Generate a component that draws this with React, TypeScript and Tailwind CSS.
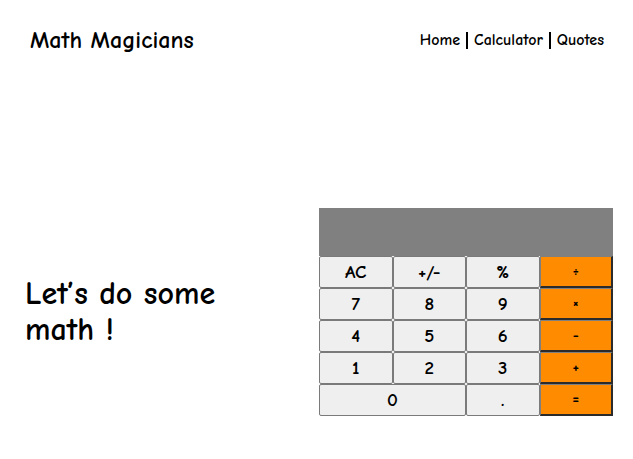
const keys: { label: string; op?: boolean; wide?: boolean }[] = [
  { label: "AC" },
  { label: "+/-" },
  { label: "%" },
  { label: "÷", op: true },
  { label: "7" },
  { label: "8" },
  { label: "9" },
  { label: "×", op: true },
  { label: "4" },
  { label: "5" },
  { label: "6" },
  { label: "-", op: true },
  { label: "1" },
  { label: "2" },
  { label: "3" },
  { label: "+", op: true },
  { label: "0", wide: true },
  { label: "." },
  { label: "=", op: true },
];

const font = { fontFamily: '"Comic Sans MS", "Comic Neue", "Chalkboard", cursive' };

function Calculator() {
  return (
    <div className="w-[294px]">
      <div className="h-[48px] bg-[#808080]" />
      <div className="grid grid-cols-4">
        {keys.map((key) =>
          key.op ? (
            <button
              key={key.label}
              type="button"
              className="h-[32px] border border-[#808080] border-r-2 border-b-2 border-r-[#2b2b2b] border-b-[#2b2b2b] bg-[#ff8c00] text-[15px] font-bold text-black"
            >
              {key.label}
            </button>
          ) : (
            <button
              key={key.label}
              type="button"
              className={`h-[32px] rounded-[2px] border border-[#7a7a7a] bg-[#efefef] text-[19px] font-semibold text-black ${key.wide ? "col-span-2" : ""}`}
            >
              {key.label}
            </button>
          ),
        )}
      </div>
    </div>
  );
}

export default function App() {
  return (
    <div className="h-[459px] bg-white text-black" style={font}>
      <header className="flex h-[80px] items-center justify-between pl-[30px] pr-[29px]">
        <h1 className="text-[24px] font-semibold">Math Magicians</h1>
        <nav className="flex items-center text-[16px] font-semibold">
          <a href="#">Home</a>
          <span className="mx-[6px] h-[17px] w-[2px] bg-black" />
          <a href="#">Calculator</a>
          <span className="mx-[6px] h-[17px] w-[2px] bg-black" />
          <a href="#">Quotes</a>
        </nav>
      </header>
      <main className="flex items-center justify-between pl-[25px] pr-[20px] pt-[128px]">
        <h2 className="w-[230px] text-[32px] font-semibold leading-[36px]">Let’s do some math !</h2>
        <Calculator />
      </main>
    </div>
  );
}
